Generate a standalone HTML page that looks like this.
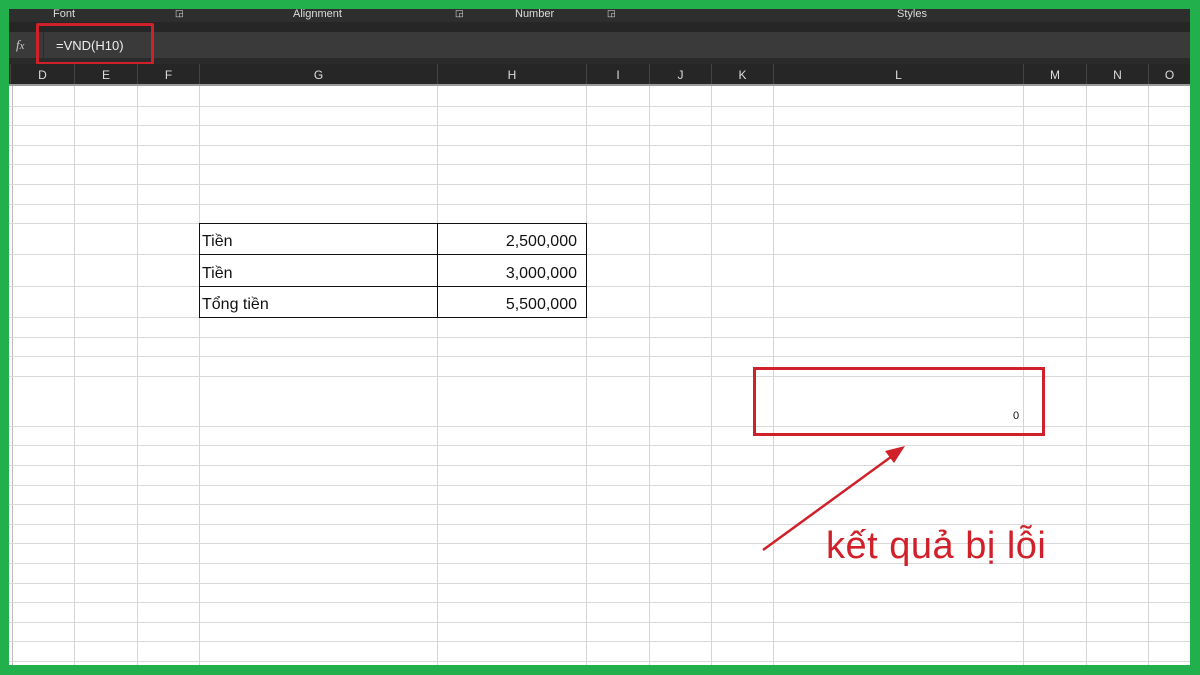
<!DOCTYPE html>
<html><head><meta charset="utf-8"><style>
*{margin:0;padding:0;box-sizing:border-box}
body{width:1200px;height:675px;overflow:hidden;background:#21b04b;position:relative;font-family:"Liberation Sans",sans-serif}
.abs{position:absolute}
#win{left:9px;top:9px;width:1181px;height:656px;background:#fff;overflow:hidden}
.rib{left:0;top:0;width:1181px;height:13px;background:#2e2e2e;color:#ddd;font-size:11px}
.rib span{position:absolute;top:-1px}
.strip{left:0;top:13px;width:1181px;height:10px;background:#262626}
.fbar{left:0;top:23px;width:1181px;height:26px;background:#3a3a3a}
.fstrip{left:0;top:49px;width:1181px;height:6px;background:#2a2a2a}
.hdr{left:0;top:55px;width:1181px;height:22px;background:#262626;border-bottom:2px solid #9a9a9a}
.hdr div{position:absolute;top:0;height:20px;line-height:22px;text-align:center;color:#ddd;font-size:12px;border-left:1px solid #444}
.vl{position:absolute;top:77px;bottom:0;width:1px;background:#d4d4d4}
.hl{position:absolute;left:0;right:0;height:1px;background:#d9d9d9}
.cell{position:absolute;font-family:"Liberation Sans","DejaVu Sans",sans-serif;font-size:16px;color:#111}
</style></head><body>
<div id="win" class="abs">
 <div class="abs rib"><span style="left:44px">Font</span><span style="left:166px;font-size:9px">◲</span><span style="left:284px">Alignment</span><span style="left:446px;font-size:9px">◲</span><span style="left:506px">Number</span><span style="left:598px;font-size:9px">◲</span><span style="left:888px">Styles</span></div>
 <div class="abs strip"></div>
 <div class="abs fbar"><span class="abs" style="left:7px;top:5px;color:#ccc;font-style:italic;font-family:'Liberation Serif',serif;font-size:13px">f<small>x</small></span>
  <div class="abs" style="left:34px;top:0;width:1px;height:26px;background:#2a2a2a"></div>
  <span class="abs" style="left:47px;top:6px;color:#eee;font-size:13px">=VND(H10)</span></div>
 <div class="abs fstrip"></div>
 <div class="abs" style="left:27px;top:14px;width:118px;height:42px;border:3px solid #d0202a;border-radius:2px"></div>
 <div class="abs hdr">
  <div style="left:1px;width:64px">D</div><div style="left:65px;width:63px">E</div><div style="left:128px;width:62px">F</div><div style="left:190px;width:238px">G</div><div style="left:428px;width:149px">H</div><div style="left:577px;width:63px">I</div><div style="left:640px;width:62px">J</div><div style="left:702px;width:62px">K</div><div style="left:764px;width:250px">L</div><div style="left:1014px;width:63px">M</div><div style="left:1077px;width:62px">N</div><div style="left:1139px;width:42px">O</div>
 </div>
 <div class="vl" style="left:3px;background:#bbb"></div>
 <div class="vl" style="left:65px"></div><div class="vl" style="left:128px"></div><div class="vl" style="left:190px"></div><div class="vl" style="left:428px"></div><div class="vl" style="left:577px"></div><div class="vl" style="left:640px"></div><div class="vl" style="left:702px"></div><div class="vl" style="left:764px"></div><div class="vl" style="left:1014px"></div><div class="vl" style="left:1077px"></div><div class="vl" style="left:1139px"></div>
 <div class="hl" style="top:97px"></div><div class="hl" style="top:116px"></div><div class="hl" style="top:136px"></div><div class="hl" style="top:155px"></div><div class="hl" style="top:175px"></div><div class="hl" style="top:195px"></div><div class="hl" style="top:214px"></div><div class="hl" style="top:245px"></div><div class="hl" style="top:277px"></div><div class="hl" style="top:308px"></div><div class="hl" style="top:328px"></div><div class="hl" style="top:347px"></div><div class="hl" style="top:367px"></div><div class="hl" style="top:417px"></div><div class="hl" style="top:436px"></div><div class="hl" style="top:456px"></div><div class="hl" style="top:476px"></div><div class="hl" style="top:495px"></div><div class="hl" style="top:515px"></div><div class="hl" style="top:534px"></div><div class="hl" style="top:554px"></div><div class="hl" style="top:574px"></div><div class="hl" style="top:593px"></div><div class="hl" style="top:613px"></div><div class="hl" style="top:632px"></div><div class="hl" style="top:652px"></div>
 <div class="abs" style="left:190px;top:214px;width:388px;height:95px;border:1px solid #111;background:#fff"></div>
 <div class="abs" style="left:428px;top:214px;width:1px;height:95px;background:#111"></div>
 <div class="abs" style="left:190px;top:245px;width:388px;height:1px;background:#111"></div>
 <div class="abs" style="left:190px;top:277px;width:388px;height:1px;background:#111"></div>
 <div class="cell" style="left:193px;top:224px">Tiền</div><div class="cell" style="left:193px;top:256px">Tiền</div><div class="cell" style="left:193px;top:287px">Tổng tiền</div>
 <div class="cell" style="left:430px;width:138px;text-align:right;top:224px">2,500,000</div>
 <div class="cell" style="left:430px;width:138px;text-align:right;top:256px">3,000,000</div>
 <div class="cell" style="left:430px;width:138px;text-align:right;top:287px">5,500,000</div>
 <div class="abs" style="left:744px;top:358px;width:292px;height:69px;border:3px solid #d0202a"></div>
 <div class="cell" style="left:1004px;top:401px;font-size:11px">0</div>
 <svg class="abs" style="left:0;top:0" width="1181" height="656"><line x1="754" y1="541" x2="886" y2="445" stroke="#d0202a" stroke-width="2.5"/><polygon points="896,437 876,442 885,454" fill="#d0202a"/></svg>
 <div class="abs" style="left:817px;top:516px;color:#d0202a;font-size:38px;letter-spacing:0.5px;font-family:'Liberation Sans','DejaVu Sans',sans-serif">kết quả bị lỗi</div>
</div>
</body></html>
